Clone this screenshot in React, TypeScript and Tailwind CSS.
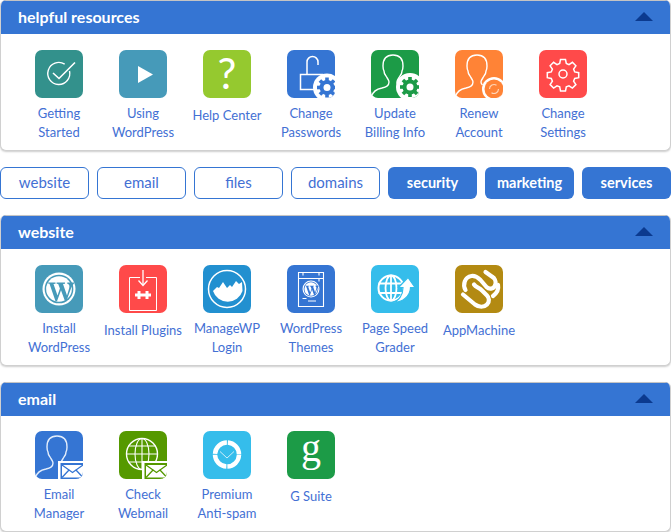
import React from "react";

const font = { fontFamily: '"Lato", "Noto Sans", sans-serif' };

const Person = ({ stroke = "#fff" }: { stroke?: string }) => (
  <path d="M1 46c1-5 5-7 10-8 4-1 7-2 7-6 0-2-2-4-3-6-1-1-2-3-2-5-1-2-1-3-1-5 0-8 4-11 10-11s10 3 10 11c0 2 0 3-1 5 0 2-1 4-2 5-1 2-3 4-3 6 0 1 .5 2 1.500 3" fill="none" stroke={stroke} strokeWidth="1.400" />
);

const Gear = ({ cx, cy, color, r = 10 }: { cx: number; cy: number; color: string; r?: number }) => {
  const teeth = [0, 45, 90, 135, 180, 225, 270, 315];
  return (
    <g>
      <circle cx={cx} cy={cy} r={r + 4} fill="#fff" />
      <circle cx={cx} cy={cy} r={r - 2.500} fill={color} />
      {teeth.map((a) => (
        <rect key={a} x={cx - 1.800} y={cy - r} width="3.600" height="4" fill={color} transform={`rotate(${a} ${cx} ${cy})`} />
      ))}
      <circle cx={cx} cy={cy} r={r - 6.500} fill="#fff" />
    </g>
  );
};

const Mail = ({ color }: { color: string }) => (
  <g>
    <rect x="23" y="30" width="25" height="18" fill="#fff" />
    <rect x="25.500" y="32" width="22.500" height="16" fill={color} />
    <rect x="27" y="34" width="21" height="12.500" fill="#fff" />
    <path d="M27 34l10.500 7.500L48 34M27 46.500l7.500-8M48 46.500l-7.500-8" fill="none" stroke={color} strokeWidth="1.300" />
  </g>
);

const Wp = ({ cx, cy, r, bg }: { cx: number; cy: number; r: number; bg: string }) => (
  <g>
    <circle cx={cx} cy={cy} r={r} fill="#fff" />
    <circle cx={cx} cy={cy} r={r * 0.87} fill={bg} />
    <circle cx={cx} cy={cy} r={r * 0.78} fill="#fff" />
    <g transform={`translate(${cx} ${cy}) scale(${r / 16.500})`}>
      <path d="M-12-6.500h8.500v1.300l-2 .3 4 11.500 2.400-7-1.700-4.500-1.600-.3v-1.300h8.400v1.300l-2 .3 4 11.500 2.100-7c.8-2.700.2-4.300-1.800-4.800v-1.300c3 0 5.500 0 7.500 0-3.200 3-3.800 6-8.300 18.700h-1.500l-4-11-4 11h-1.500l-6-17.400-2-.5z" fill={bg} />
    </g>
  </g>
);

const icons: Record<string, React.ReactNode> = {
  check: (
    <g fill="none" stroke="#fff" strokeWidth="1.400">
      <path d="M34.500 21a11 11 0 1 1-4.800-6.800" />
      <path d="M18 23l6 5.500L40 12.500" strokeWidth="1.600" />
    </g>
  ),
  play: <path d="M19 16l15 8.500-15 8.500z" fill="#fff" />,
  help: (
    <text x="24" y="39" textAnchor="middle" fontSize="42" fill="#fff" fontFamily="Lato, sans-serif" fontWeight="400">?</text>
  ),
  lock: (
    <g>
      <path d="M20 24v-12a5.500 5.500 0 0 1 11 0v3" fill="none" stroke="#fff" strokeWidth="1.500" />
      <rect x="13.500" y="24.500" width="22" height="15" fill="none" stroke="#fff" strokeWidth="1.500" />
      <Gear cx={40} cy={37.500} color="#3575d3" r={10} />
    </g>
  ),
  billing: (
    <g>
      <Person />
      <Gear cx={39} cy={37} color="#1c9b47" r={10} />
    </g>
  ),
  renew: (
    <g>
      <Person />
      <circle cx="39" cy="39" r="12" fill="#fff" />
      <circle cx="39" cy="39" r="9.500" fill="#ff8336" />
      <path d="M34.500 39a4.500 4.500 0 0 1 7-3.700M43.500 39a4.500 4.500 0 0 1-7 3.700" fill="none" stroke="#ffd5b8" strokeWidth="1.200" />
    </g>
  ),
  settings: (
    <g fill="none" stroke="#fff" strokeWidth="1.500">
      <path d="M21.500 9.500h5l.8 4 2.700 1.100 3.400-2.300 3.500 3.500-2.300 3.400 1.100 2.700 4 .8v5l-4 .8-1.100 2.700 2.300 3.400-3.500 3.500-3.400-2.300-2.700 1.100-.8 4h-5l-.8-4-2.700-1.100-3.400 2.300-3.500-3.500 2.300-3.400-1.100-2.700-4-.8v-5l4-.8 1.100-2.700-2.300-3.400 3.500-3.500 3.400 2.300 2.700-1.100z" />
      <circle cx="24" cy="24" r="4" />
    </g>
  ),
  wp: <Wp cx={24} cy={24} r={16.500} bg="#469ab9" />,
  plugin: (
    <g>
      <path d="M21 12.500h-10.500v33h27v-33H27" fill="none" stroke="#fff" strokeWidth="1" />
      <path d="M24 5v15" stroke="#fff" strokeWidth="1.300" />
      <path d="M19.500 15.500l4.500 5 4.500-5" fill="none" stroke="#fff" strokeWidth="1.300" />
      <path d="M16 28.500h2.500v-2.500h3v2.500h5v-2.500h3v2.500h2.500v3h-2.500v2.500h-3v-2.500h-5v2.500h-3v-2.500h-2.500z" fill="#fff" />
    </g>
  ),
  manage: (
    <g>
      <circle cx="24" cy="24" r="18.500" fill="none" stroke="#fff" strokeWidth="1.500" />
      <path d="M10 26l4-4 2 1 4-6 4 6 3-3 2 2 4-6 3 3 3-2 .5 9A15.500 15.500 0 0 1 10 26z" fill="#fff" />
    </g>
  ),
  themes: (
    <g>
      <path d="M11.500 7.500h25v34h-25zM11.500 13.500h25M16 7.500v3M32 7.500v3M32 13.500v3" fill="none" stroke="#fff" strokeWidth="1.100" />
      <path d="M15.500 33.500h4M21 36h8" stroke="#fff" strokeWidth="1.200" />
      <Wp cx={24} cy={24} r={8.500} bg="#3575d3" />
    </g>
  ),
  speed: (
    <g>
      <g fill="none" stroke="#fff" strokeWidth="1.800">
        <circle cx="20" cy="23" r="12.500" strokeWidth="2" />
        <ellipse cx="20" cy="23" rx="5.500" ry="12.500" />
        <path d="M20 10.500v25M7.500 18.500h25M7.500 28h25" />
      </g>
      <path d="M22 37c6-1 10-7 10-14.500h-4.500l9.500-10 7 10h-4.500c0 8-8 16-17.500 14.500z" fill="#fff" stroke="#35bdeb" strokeWidth="1.200" />
    </g>
  ),
  app: (
    <g fill="none" stroke="#fff" strokeLinecap="round" strokeLinejoin="round" strokeWidth="4.200">
      <path d="M10.500 25c-3-5-1-13 6-14 4-.5 7 2 9 4l6 7c3 3 8 2 9-3 .5-3-1-6-3-7l-7-5" />
      <path d="M8 29.500l12 10c4 3 9 3 12 0 3-3 2-7 0-9l-5-5c-3-3-6-3-8-6" />
      <path d="M38 31c4-3 6-6 5-11" />
    </g>
  ),
  emailMgr: (
    <g>
      <Person stroke="#e3edfb" />
      <Mail color="#3575d3" />
    </g>
  ),
  webmail: (
    <g>
      <g fill="none" stroke="#fff" strokeWidth="1.100">
        <circle cx="23" cy="23" r="15.500" strokeWidth="1.400" />
        <ellipse cx="23" cy="23" rx="7" ry="15.500" />
        <path d="M23 7.500v31M7.500 23h31M9.500 15h27M9.500 31h27" />
      </g>
      <Mail color="#559900" />
    </g>
  ),
  spam: (
    <g>
      <circle cx="24" cy="23.500" r="12" fill="none" stroke="#fff" strokeWidth="4.500" strokeDasharray="17.850 1" strokeDashoffset="-0.500" />
      <path d="M17 20.500l7 6.500 7-6.500" fill="none" stroke="#cdeefa" strokeWidth="1" />
    </g>
  ),
  g: (
    <text x="24" y="30" textAnchor="middle" fontSize="40" fill="#fff" fontFamily='"Liberation Serif", serif'>g</text>
  ),
};

type Item = { icon: string; bg: string; label: string[] };

const Tile = ({ item }: { item: Item }) => (
  <div className="flex w-[84px] flex-col items-center">
    <svg
      viewBox="0 0 48 48"
      className={`h-12 w-12 rounded-[7px] ${item.icon === "help" || item.icon === "g" ? "overflow-visible" : ""}`}
      style={{ background: item.bg }}
    >
      {icons[item.icon]}
    </svg>
    <div className={`flex w-[100px] flex-col items-center text-[13px] leading-[19px] text-[#4370d4] whitespace-nowrap ${item.label.length === 1 ? "mt-[8px]" : "mt-[6px]"}`}>
      {item.label.map((l) => (
        <span key={l}>{l}</span>
      ))}
    </div>
  </div>
);

const Card = ({ title, items, className, body }: { title: string; items: Item[]; className: string; body: string }) => (
  <section className={`overflow-hidden rounded-[6px] border border-t-0 border-[#d0d0d0] bg-white shadow-[0_1px_2px_rgba(0,0,0,0.2)] ${className}`}>
    <header className="flex h-[34px] items-center justify-between border-t border-[#c4c4c4] bg-[#3575d3] pl-[17px] pr-[17px]">
      <h2 className="mb-[2px] text-[16px] font-bold text-white">{title}</h2>
      <svg viewBox="0 0 18 9" className="mb-[3px] h-[9px] w-[18px]">
        <path d="M9 0l9 9H0z" fill="#0b3a8f" />
      </svg>
    </header>
    <div className={`flex pl-[16px] ${body}`}>
      {items.map((it) => (
        <Tile key={it.label.join(" ")} item={it} />
      ))}
    </div>
  </section>
);

const helpful: Item[] = [
  { icon: "check", bg: "#33918c", label: ["Getting", "Started"] },
  { icon: "play", bg: "#469ab9", label: ["Using", "WordPress"] },
  { icon: "help", bg: "#95c92f", label: ["Help Center"] },
  { icon: "lock", bg: "#3575d3", label: ["Change", "Passwords"] },
  { icon: "billing", bg: "#1c9b47", label: ["Update", "Billing Info"] },
  { icon: "renew", bg: "#ff8336", label: ["Renew", "Account"] },
  { icon: "settings", bg: "#ff4a4a", label: ["Change", "Settings"] },
];
const website: Item[] = [
  { icon: "wp", bg: "#469ab9", label: ["Install", "WordPress"] },
  { icon: "plugin", bg: "#ff4a4a", label: ["Install Plugins"] },
  { icon: "manage", bg: "#2290d0", label: ["ManageWP", "Login"] },
  { icon: "themes", bg: "#3575d3", label: ["WordPress", "Themes"] },
  { icon: "speed", bg: "#35bdeb", label: ["Page Speed", "Grader"] },
  { icon: "app", bg: "#b38a12", label: ["AppMachine"] },
];
const email: Item[] = [
  { icon: "emailMgr", bg: "#3575d3", label: ["Email", "Manager"] },
  { icon: "webmail", bg: "#559900", label: ["Check", "Webmail"] },
  { icon: "spam", bg: "#35bdeb", label: ["Premium", "Anti-spam"] },
  { icon: "g", bg: "#1c9b47", label: ["G Suite"] },
];

const outline = ["website", "email", "files", "domains"];
const filled = ["security", "marketing", "services"];

export default function App() {
  return (
    <div className="h-[532px] w-[671px] overflow-hidden bg-white" style={font}>
      <Card title="helpful resources" items={helpful} className="h-[151px]" body="pt-[16px]" />
      <div className="mt-[16px] grid grid-cols-7 gap-2">
        {outline.map((t) => (
          <button key={t} className="h-[32px] rounded-[6px] border border-[#3575d3] bg-white pb-[1px] text-[15px] text-[#4370d4]">{t}</button>
        ))}
        {filled.map((t) => (
          <button key={t} className="h-[32px] rounded-[6px] bg-[#3575d3] pb-[1px] text-[14.5px] font-bold text-white">{t}</button>
        ))}
      </div>
      <Card title="website" items={website} className="mt-[16px] h-[151px]" body="pt-[16px]" />
      <Card title="email" items={email} className="mt-[16px] h-[150px]" body="pt-[15px]" />
    </div>
  );
}
